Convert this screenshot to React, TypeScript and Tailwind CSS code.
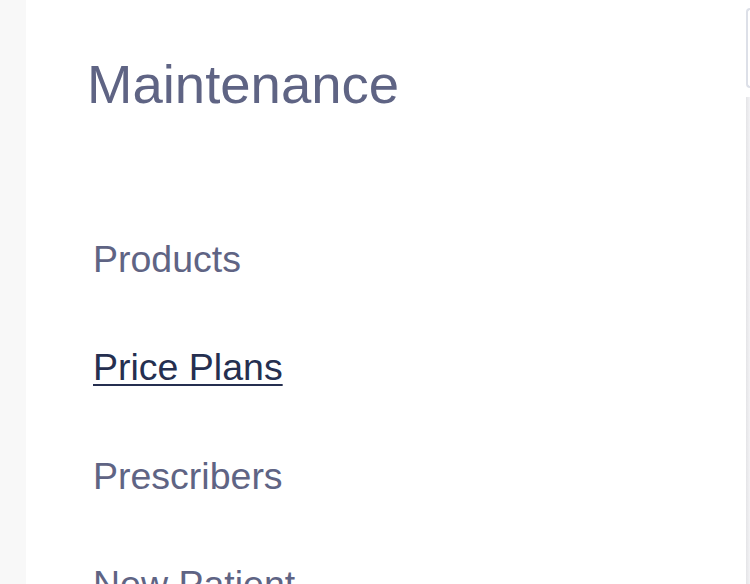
import React from "react";

const items = ["Products", "Price Plans", "Prescribers", "New Patient"];

export default function App() {
  return (
    <div className="flex h-[584px] w-[750px] overflow-hidden bg-white font-['Liberation_Sans',Arial,sans-serif]">
      <div className="w-[26px] shrink-0 bg-[#f8f8f8]"></div>
      <div className="flex-1 bg-white pl-[61px] pt-[58px]">
        <h1 className="text-[54.5px] leading-none font-normal text-[#5f6484]">Maintenance</h1>
        <nav className="mt-[128px] flex flex-col gap-[71px] pl-[6px]">
          {items.map((item) => (
            <a
              key={item}
              href="#"
              className={
                item === "Price Plans"
                  ? "w-fit text-[37.5px] leading-none text-[#252f50] underline decoration-2 underline-offset-[4px]"
                  : "w-fit text-[37.5px] leading-none text-[#5f6484]"
              }
            >
              {item}
            </a>
          ))}
        </nav>
      </div>
      <div className="flex w-[4px] shrink-0 flex-col">
        <div className="mt-[8px] h-[80px] rounded-l-[6px] border-y-2 border-l-2 border-[#dde0e8]"></div>
        <div className="mt-[9px] flex-1 bg-gradient-to-r from-[#e4e4e7] to-[#f3f3f5]"></div>
      </div>
    </div>
  );
}
